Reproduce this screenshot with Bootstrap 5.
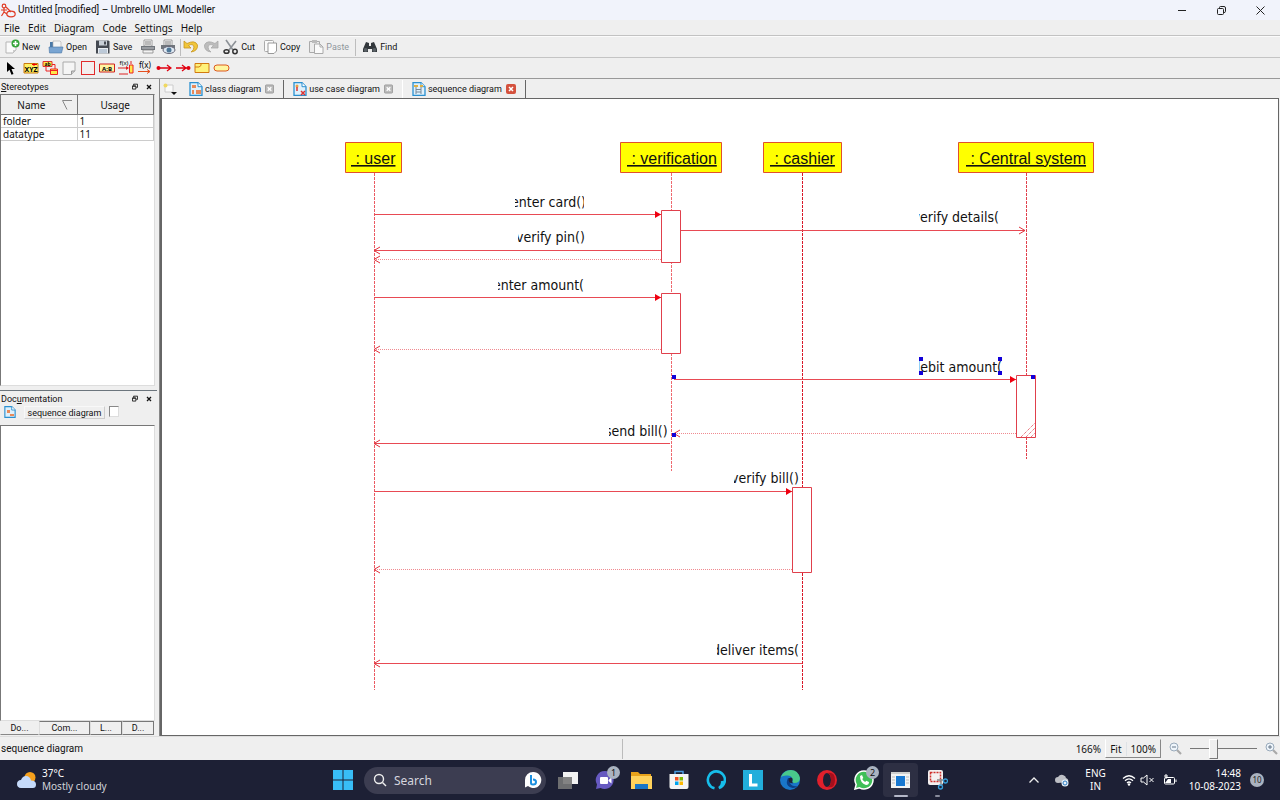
<!DOCTYPE html>
<html lang="en">
<head>
<meta charset="utf-8">
<meta name="viewport" content="width=device-width, initial-scale=1">
<title>Untitled [modified] – Umbrello UML Modeller</title>
<link rel="stylesheet" href="https://cdn.jsdelivr.net/npm/bootstrap@5.3.0/dist/css/bootstrap.min.css">
<style>
  body { font-family: "Noto Sans", "Open Sans", sans-serif; font-size: 10px; line-height: 14px; color: #111; background: #efefef; height: 100vh; overflow: hidden; }
  button { font: inherit; color: inherit; background: none; border: 0; padding: 0; }
  svg { display: block; flex: none; }
  .titlebar { height: 20px; background: #f1f3fb; font-family: Roboto, sans-serif; gap: 2px; }
  .winbtn { width: 39px; height: 20px; }
  .menus { height: 16px; border-bottom: 1px solid #c2c2c2; padding-left: 4px; gap: 8px; }
  .menus a { color: #111; text-decoration: none; }
  .tools, .dockhead, .docrow, .docktabs, .viewtabs, .msg { font-family: Roboto, sans-serif; }
  .tools { height: 22px; border-top: 1px solid #fbfbfb; border-bottom: 1px solid #c4c4c4; font-size: 9px; }
  .tools .cmd { display: flex; align-items: center; gap: 2px; padding: 0 4px; }
  .tools .vsep { width: 1px; height: 17px; background: #bdbdbd; margin: 0 2px; }
  .shapes { height: 21px; border-bottom: 1px solid #999; padding-left: 4px; gap: 3px; }
  .dock { width: 157px; }
  .dockhead { height: 15px; font-size: 9px; padding: 0 5px 0 1px; }
  .sunken { background: #fff; border: 1px solid #777; border-right-color: #ddd; border-bottom-color: #ddd; margin-right: 2px; }
  .stereo { line-height: 12px; width: 153px; border-collapse: separate; border-spacing: 0; }
  .stereo th { background: #efefef; font-weight: 400; height: 20px; text-align: center; border-right: 1px solid #777; border-bottom: 1px solid #777; }
  .stereo td { height: 13px; padding: 0 2px; border-right: 1px solid #ccc; border-bottom: 1px solid #ccc; }
  .docrow { height: 19px; font-size: 9px; }
  .docname { width: 81px; height: 13px; line-height: 12px; text-align: center; border: 1px solid #ccc; border-top-color: #f8f8f8; border-left-color: #f8f8f8; }
  .docrow input { appearance: none; width: 10px; height: 11px; margin: 0 0 0 4px; background: #fff; border: 1px solid #ddd; border-top-color: #888; border-left-color: #888; }
  .doctext { resize: none; border-radius: 0; outline: 0; }
  .docktabs { height: 15px; font-size: 9px; line-height: 13px; }
  .docktabs button { border: 1px solid #777; border-left-color: #ddd; height: 14px; }
  .docktabs .on { border-color: #efefef #efefef #888; }
  .work { border-left: 1px solid #888; margin-left: 2px; }
  .viewtabs { height: 19px; font-size: 9px; padding-left: 3px; }
  .vtab { display: flex; align-items: center; height: 18px; padding: 0 9px; gap: 2px; border-right: 1px solid #666; }
  .vtab.soft { border-right-color: #fff; }
  .vtab .x { margin-left: 2px; }
  .paper { background: #fff; border: 1px solid #666; border-width: 1px 1px 1px 2px; margin-right: 1px; overflow: hidden; }
  .status { height: 24px; border-top: 1px solid #ddd; }
  .cell { height: 20px; }
  .msg { width: 623px; border-right: 1px solid #bbb; padding-left: 1px; }
  .fitbox { border: 1px solid #888; border-top-color: #efefef; border-left-color: #fff; height: 19px; }
  .fitbox button { padding: 0 4px; }
  .zoomer { appearance: none; width: 67px; height: 20px; margin: 0; background: linear-gradient(#777,#777) 0 9px / 100% 1px no-repeat; }
  .zoomer::-webkit-slider-thumb { appearance: none; width: 9px; height: 20px; background: #efefef; border: 1px solid #777; border-left-color: #fff; border-top-color: #fff; }
  .taskbar { height: 40px; background: #1d2035; color: #fff; display: grid; grid-template-columns: 1fr auto 1fr; align-items: center; line-height: 13px; }
  .sky { color: #d2d3da; }
  .app { position: relative; width: 35px; height: 34px; display: flex; align-items: center; justify-content: center; }
  .app.open { background: #2d2f43; border-radius: 4px; }
  .search { width: 182px; height: 27px; border-radius: 14px; background: #3c3d51; padding: 0 4px 0 9px; gap: 7px; }
  .search input { min-width: 0; background: none; border: 0; outline: 0; color: #ddd; font-size: 12px; padding: 0; }
  .search input::placeholder { color: #d5d5de; opacity: 1; }
  .note-count { position: absolute; right: 2px; top: 3px; width: 13px; height: 13px; border-radius: 7px; background: #aab3c0; color: #111; font-size: 9px; line-height: 13px; text-align: center; }
  .run { position: absolute; bottom: 0; height: 2px; border-radius: 1px; background: #b5b8c8; width: 14px; }
  .run.tiny { width: 5px; background: #888b9b; }
  .tray { padding-right: 16px; }
  .day { width: 14px; height: 14px; border-radius: 7px; background: #aab3c0; color: #222; font-size: 8px; line-height: 14px; text-align: center; margin-left: 9px; }
  .lbl { font: 14px "DejaVu Sans Condensed", "Noto Sans", sans-serif; fill: #111; }
  .role { font: 16px "Liberation Sans", Arial, sans-serif; fill: #111; white-space: pre; text-decoration: underline; }
</style>
</head>
<body class="d-flex flex-column">

<svg width="0" height="0" class="position-absolute" aria-hidden="true">
  <symbol id="diagdoc" viewBox="0 0 14 14"><path d="M1 .7h8l4 4v8.600H1z" fill="#dff0fb" stroke="#2a90d0" stroke-width="1.300"/><path d="M9 .7v4h4" fill="#fff" stroke="#2a90d0"/></symbol>
  <symbol id="restore" viewBox="0 0 7 7"><path d="M2 .8h4.500v3.700H5M2 .5v2M.5 3h4v3.500h-4zM.5 3h4" fill="none" stroke="#111" stroke-width="1"/></symbol>
  <symbol id="cross" viewBox="0 0 6 6"><path d="M1 1l4 4M5 1L1 5" stroke="#111" stroke-width="1.300"/></symbol>
  <symbol id="tabx" viewBox="0 0 10 10"><rect x=".5" y=".5" width="9" height="9" rx="1" fill="#bbb" stroke="#999"/><path d="M3 3l4 4M7 3L3 7" stroke="#fff" stroke-width="1.500"/></symbol>
  <symbol id="lens" viewBox="0 0 13 13"><path d="M8 8l4 4" stroke="#a9a9a9" stroke-width="2.200"/><circle cx="5" cy="5" r="4" fill="#eef5fb" stroke="#9ab" stroke-width="1"/></symbol>
</svg>

<header class="titlebar d-flex align-items-center">
  <svg width="16" height="18" viewBox="0 0 16 18"><g fill="none" stroke="#e03c28" stroke-width="1.200"><circle cx="4" cy="5" r="1.800"/><path d="M4 7v4M1 9h6M4 11l-2.500 4M4 11l3 2M6 6l5 5"/><ellipse cx="11" cy="13" rx="4.200" ry="2.800"/></g></svg>
  <span>Untitled [modified] – Umbrello UML Modeller</span>
  <div class="ms-auto d-flex">
    <button class="winbtn d-flex align-items-center justify-content-center" aria-label="Minimize"><svg width="9" height="9"><path d="M0 4.500h8" stroke="#222"/></svg></button>
    <button class="winbtn d-flex align-items-center justify-content-center" aria-label="Restore"><svg width="9" height="9" viewBox="0 0 9 9"><path d="M2.500 2V1.500q0-1 1-1H7q1.500 0 1.500 1.500v3.500q0 1-1.500 1" fill="none" stroke="#222"/><rect x=".5" y="2.500" width="6" height="6" rx="1" fill="none" stroke="#222"/></svg></button>
    <button class="winbtn d-flex align-items-center justify-content-center" aria-label="Close"><svg width="9" height="9"><path d="M.5.5l8 8M8.500.5l-8 8" stroke="#222"/></svg></button>
  </div>
</header>

<nav class="menus d-flex align-items-center">
  <a href="#">File</a><a href="#">Edit</a><a href="#">Diagram</a><a href="#">Code</a><a href="#">Settings</a><a href="#">Help</a>
</nav>

<div class="tools d-flex align-items-center" role="toolbar">
  <button class="cmd"><svg width="16" height="16" viewBox="0 0 16 16"><path d="M2 3h10v8l-3 3H2z" fill="#fafafa" stroke="#b5b5b5"/><path d="M12 11l-3 3v-3z" fill="#ccc"/><circle cx="11.500" cy="4.500" r="4" fill="#35a53a"/><path d="M11.500 2v5M9 4.500h5" stroke="#fff" stroke-width="1.600"/></svg>New</button>
  <button class="cmd"><svg width="16" height="16" viewBox="0 0 16 16"><path d="M2 3h4l1 2h6v8H2z" fill="#4a7aa8"/><path d="M5 2h7l1 1v7H5z" fill="#f5f5f5" stroke="#aaa" stroke-width=".6"/><path d="M1 8h14l-1.500 6H1.500z" fill="#7aa5d2" stroke="#4a76a5" stroke-width=".6"/></svg>Open</button>
  <button class="cmd"><svg width="16" height="16" viewBox="0 0 16 16"><path d="M1 1.500h12.500l1 1v12H1z" fill="#454a52"/><rect x="4" y="1.500" width="8" height="5" fill="#c9d0d8"/><rect x="9" y="2.500" width="2" height="3" fill="#454a52"/><rect x="3" y="9" width="10" height="5.500" fill="#e9edf2"/><path d="M4 11h8M4 13h8" stroke="#8fa5bd"/></svg>Save</button>
  <button class="cmd pe-0" aria-label="Print"><svg width="16" height="16" viewBox="0 0 16 16"><path d="M4 1h8v6H4z" fill="#fff" stroke="#888" stroke-width=".8"/><path d="M5 3h6M5 5h6" stroke="#777"/><path d="M1 7h14v4H1z" fill="#70757b"/><path d="M2 9h12" stroke="#c5c8cb"/><path d="M3 11h10v3H3z" fill="#f2f2f2" stroke="#888" stroke-width=".8"/></svg></button>
  <button class="cmd pe-1" aria-label="Print Preview"><svg width="16" height="16" viewBox="0 0 16 16"><path d="M4 1h8v6H4z" fill="#fff" stroke="#888" stroke-width=".8"/><path d="M5 3h6M5 5h6" stroke="#777"/><path d="M1 6h14v4H1z" fill="#70757b"/><ellipse cx="9" cy="11" rx="6" ry="3.500" fill="#dfe9f2" stroke="#667"/><circle cx="9" cy="11" r="2.500" fill="#4f7898"/></svg></button>
  <span class="vsep ms-0"></span>
  <button class="cmd px-0" aria-label="Undo"><svg width="16" height="16" viewBox="0 0 16 16"><path d="M1 2v7h7L5.500 6.500Q10 4 11 8q0 3-3 5 7-1 6.500-7Q12 .5 4 4.500z" fill="#f1c63a" stroke="#c69521" stroke-width=".8"/></svg></button>
  <button class="cmd pe-1" aria-label="Redo"><svg width="16" height="16" viewBox="0 0 16 16"><path d="M15 2v7H8l2.500-2.500Q6 4 5 8q0 3 3 5-7-1-6.500-7Q4 .5 12 4.500z" fill="#bcbcbc" stroke="#aaa" stroke-width=".8"/></svg></button>
  <button class="cmd ps-0"><svg width="16" height="16" viewBox="0 0 16 16"><path d="M3 1l7 10M13 2L6 11" stroke="#8d9297" stroke-width="1.600"/><g fill="none" stroke="#333" stroke-width="1.500"><ellipse cx="3.500" cy="12.500" rx="2.500" ry="1.800"/><circle cx="12" cy="12.500" r="2.200"/></g></svg>Cut</button>
  <button class="cmd"><svg width="15" height="16" viewBox="0 0 15 16"><rect x="1.500" y="1.500" width="9" height="11" rx="1" fill="#fafafa" stroke="#aaa"/><path d="M5 4h8.500v8l-2.500 2.500H5z" fill="#fff" stroke="#999"/></svg>Copy</button>
  <button class="cmd text-secondary text-opacity-75"><svg width="16" height="16" viewBox="0 0 16 16"><path d="M1.500 2.500h10v11h-10z" fill="#ececec" stroke="#aaa"/><rect x="4" y="1" width="5" height="3" fill="#bbb"/><path d="M6.500 5H12l3 3v6.500H6.500z" fill="#fafafa" stroke="#aaa"/><path d="M12 5v3h3" fill="none" stroke="#aaa"/></svg>Paste</button>
  <span class="vsep"></span>
  <button class="cmd"><svg width="16" height="16" viewBox="0 0 16 16"><path d="M4 3l3 1v3h2V4l3-1 3 7v3h-5v-3H6v3H1v-3z" fill="#32373b"/><circle cx="3.700" cy="11" r="2" fill="#596065"/><circle cx="12.300" cy="11" r="2" fill="#596065"/></svg>Find</button>
</div>

<div class="shapes d-flex align-items-center" role="toolbar">
  <button aria-label="Select"><svg width="16" height="16" viewBox="0 0 16 16"><path d="M3 2l8 7H7.500l2 5-2 .8-2-5L3 12z" fill="#000"/></svg></button>
  <button aria-label="Object"><svg width="16" height="16" viewBox="0 0 16 16"><path d="M1 3.500h14v9.500H1z" fill="#fff263" stroke="#c97a10"/><text x="8" y="12" font-size="7" font-weight="700" text-anchor="middle">XYZ</text><path d="M11 3V6M9 4.500h5" stroke="#e00"/></svg></button>
  <button aria-label="Message object"><svg width="16" height="16" viewBox="0 0 16 16"><path d="M1 1.500h9v5H1z" fill="#ffe84a" stroke="#d33"/><text x="5.500" y="6" font-size="5" font-weight="700" text-anchor="middle">ab</text><path d="M10 4.500h3V9M4 7v4h4" fill="none" stroke="#e22"/><path d="M8.500 9h7v5.500h-7z" fill="#ffe84a" stroke="#e22"/><path d="M9 10.500h6" stroke="#e22"/></svg></button>
  <button aria-label="Note"><svg width="16" height="16" viewBox="0 0 16 16"><path d="M2 2h12v9l-3.500 3.500H2z" fill="#f5f5f5" stroke="#aaa"/><path d="M14 11h-3.500v3.500" fill="#ccc" stroke="#999"/></svg></button>
  <button aria-label="Box"><svg width="16" height="16"><rect x="1.500" y="1.500" width="13" height="13" fill="#f3eeee" stroke="#e12b2b"/></svg></button>
  <button aria-label="Object box"><svg width="16" height="16" viewBox="0 0 16 16"><path d="M.5 4h15v8H.5z" fill="#fff5a0" stroke="#d02020"/><text x="8" y="10.500" font-size="6" font-weight="700" text-anchor="middle">A:B</text></svg></button>
  <button aria-label="Synchronous message"><svg width="16" height="16" viewBox="0 0 16 16"><text x="6" y="5" font-size="6" text-anchor="middle">f(x)</text><path d="M0 8h10M13 1v3M1 14h9" stroke="#d22"/><path d="M8 6l3 2-3 2z" fill="#d22"/><path d="M11.500 5h3.500v8h-3.500z" fill="#ffe84a" stroke="#e22"/></svg></button>
  <button aria-label="Asynchronous message"><svg width="16" height="16" viewBox="0 0 16 16"><text x="8" y="8" font-size="8" text-anchor="middle">f(x)</text><path d="M1 11.500h12M10 9.500l3 2-3 2" stroke="#e55020" fill="none"/></svg></button>
  <button aria-label="Found message"><svg width="16" height="16" viewBox="0 0 16 16"><path d="M2 8h13M11 5l4 3-4 3" stroke="#e00010" stroke-width="1.300" fill="none"/><circle cx="2.500" cy="8" r="2" fill="#e00010"/></svg></button>
  <button aria-label="Lost message"><svg width="16" height="16" viewBox="0 0 16 16"><path d="M1 8h13M7 5l4 3-4 3" stroke="#e00010" stroke-width="1.300" fill="none"/><circle cx="13.500" cy="8" r="2" fill="#e00010"/></svg></button>
  <button aria-label="Combined fragment"><svg width="16" height="16" viewBox="0 0 16 16"><path d="M1 3.500h14v9H1z" fill="#fff27a" stroke="#d27a10"/><path d="M1 7h4l2-1.500v-2" fill="none" stroke="#d27a10"/></svg></button>
  <button aria-label="Precondition"><svg width="17" height="16" viewBox="0 0 17 16"><rect x="1" y="5" width="15" height="6" rx="3" fill="#fff6a0" stroke="#dd5a20"/></svg></button>
</div>

<main class="d-flex flex-grow-1" style="min-height:0">
  <aside class="dock d-flex flex-column flex-shrink-0">
    <div class="dockhead d-flex align-items-center gap-2"><span class="me-auto"><u>S</u>tereotypes</span><svg width="6" height="7"><use href="#restore"/></svg><svg width="6" height="6"><use href="#cross"/></svg></div>
    <div class="sunken flex-grow-1" style="flex-basis:0">
      <table class="stereo">
        <thead><tr><th class="w-50"><span class="d-flex align-items-center justify-content-end gap-3 pe-1">Name<svg width="10" height="10"><path d="M10 .5H.5l4.500 9" fill="none" stroke="#888"/></svg></span></th><th>Usage</th></tr></thead>
        <tbody><tr><td>folder</td><td>1</td></tr><tr><td>datatype</td><td>11</td></tr></tbody>
      </table>
    </div>
    <div class="mt-1 border-top border-secondary"></div>
    <div class="dockhead d-flex align-items-center gap-2"><span class="me-auto">Doc<u>u</u>mentation</span><svg width="6" height="7"><use href="#restore"/></svg><svg width="6" height="6"><use href="#cross"/></svg></div>
    <div class="docrow d-flex align-items-start ps-1">
      <svg width="12" height="12" class="me-2"><use href="#diagdoc"/><path d="M3 4h3v3H3zM6 8h4v2H6z" fill="#e88a5a"/></svg>
      <label class="docname" for="docmark">sequence diagram</label><input type="checkbox" id="docmark">
    </div>
    <textarea class="doctext sunken flex-grow-1" style="flex-basis:0" aria-label="Documentation"></textarea>
    <div class="docktabs d-flex"><button class="on" style="width:39px">Do...</button><button style="width:51px">Com...</button><button style="width:32px">L...</button><button style="width:32px">D...</button></div>
  </aside>

  <section class="work flex-grow-1 d-flex flex-column">
    <div class="viewtabs d-flex align-items-center">
      <button aria-label="New diagram" class="me-1"><svg width="14" height="14" viewBox="0 0 14 14"><path d="M2 3h8v7H2z" fill="#fafafa" stroke="#ccc"/><circle cx="2.500" cy="3.500" r="2" fill="#f0d860"/><path d="M8 10h6l-3 3z" fill="#111"/></svg></button>
      <div class="vtab ps-2"><svg width="14" height="14"><use href="#diagdoc"/><path d="M3 3h4v3H3zM7 8h5v4H7zM3 8h2v4H3z" fill="#e88a5a"/></svg><span>class diagram</span><button class="x" aria-label="Close"><svg width="9" height="10"><use href="#tabx"/></svg></button></div>
      <div class="vtab soft"><svg width="14" height="14"><use href="#diagdoc"/><circle cx="4" cy="4" r="1.500" fill="#e8a040"/><path d="M4 5v4M8 9l4 4M12 9l-4 4" stroke="#d33" stroke-width="1.500"/></svg><span>use case diagram</span><button class="x" aria-label="Close"><svg width="9" height="10"><use href="#tabx"/></svg></button></div>
      <div class="vtab"><svg width="14" height="14"><use href="#diagdoc"/><path d="M2 3h4v2H2zM8 3h3v2H8z" fill="#e0b040"/><path d="M4 5v7M9 5v7M4 7.500h5M4 10h5" stroke="#789"/></svg><span>sequence diagram</span><button class="x" aria-label="Close"><svg width="10" height="10"><rect width="10" height="10" rx="2" fill="#d4513d"/><path d="M3 3l4 4M7 3L3 7" stroke="#fff" stroke-width="1.500"/></svg></button></div>
    </div>
    <div class="paper flex-grow-1">
      <svg width="100%" height="100%" role="img" aria-label="Sequence diagram">
        <defs>
          <marker id="solid" markerUnits="userSpaceOnUse" markerWidth="7" markerHeight="8" refX="6" refY="4" orient="auto"><path d="M0 .5L6 4 0 7.500z" fill="#f00010"/></marker>
          <marker id="open" markerUnits="userSpaceOnUse" markerWidth="8" markerHeight="9" refX="6" refY="4.500" orient="auto"><path d="M0 1l6 3.500L0 8" fill="none" stroke="#e0303c"/></marker>
        </defs>
        <g transform="translate(-162 -99)">
          <g stroke="#e0404c" stroke-dasharray="3 1"><path d="M374.500 173v517" stroke="#ea5a62"/><path d="M671.500 173v298" stroke="#ee6a70"/><path d="M802.500 173v517" stroke="#d81828"/><path d="M1026.500 173v286"/></g>
          <g fill="none" stroke="#e84a54">
            <path d="M374 214.500h287" marker-end="url(#solid)"/><path d="M374 297.500h287" marker-end="url(#solid)"/><path d="M674 379.500h342" marker-end="url(#solid)"/><path d="M374 491.500h418" marker-end="url(#solid)"/>
            <path d="M681 230.500h344" marker-end="url(#open)"/><path d="M661 250.500H374" marker-end="url(#open)"/><path d="M670 443.500H374" marker-end="url(#open)"/><path d="M802 663.500H374" marker-end="url(#open)"/>
            <g stroke="#f08a90" stroke-dasharray="1 1"><path d="M661 259.500H374" marker-end="url(#open)"/><path d="M661 349.500H374" marker-end="url(#open)"/><path d="M1016 433.500H674" marker-end="url(#open)"/><path d="M792 569.500H374" marker-end="url(#open)"/></g>
          </g>
          <g fill="#fff" stroke="#e0404c"><path d="M661.500 210.500h19v52h-19zM661.500 293.500h19v60h-19zM1016.500 375.500h19v62h-19zM792.500 487.500h19v85h-19z"/><path d="M1021 437l14-14M1026 437l9-9M1031 437l4-4" stroke-dasharray="1 1"/></g>
          <g fill="#ff0" stroke="#e0502c"><path d="M345.500 142.500h56v30h-56zM620.500 142.500h101v30h-101zM763.500 142.500h78v30h-78zM958.500 142.500h135v30h-135z"/></g>
          <text class="role" x="351" y="164"> : user</text><text class="role" x="627" y="164"> : verification</text><text class="role" x="770" y="164"> : cashier</text><text class="role" x="966" y="164"> : Central system</text>
          <svg x="515" y="192" width="69" height="20"><text class="lbl" x="-4" y="15">enter card()</text></svg>
          <svg x="518" y="227" width="67" height="20"><text class="lbl" x="-2" y="15">verify pin()</text></svg>
          <svg x="498" y="275" width="86" height="20"><text class="lbl" x="86" y="15" text-anchor="end">enter amount(</text></svg>
          <svg x="919" y="207" width="80" height="20"><text class="lbl" x="80" y="15" text-anchor="end">verify details(</text></svg>
          <svg x="919" y="357" width="83" height="20"><text class="lbl" x="83" y="15" text-anchor="end">debit amount(</text></svg>
          <svg x="609" y="421" width="58" height="20"><text class="lbl" x="-4" y="15">send bill()</text></svg>
          <svg x="734" y="468" width="65" height="20"><text class="lbl" x="-3" y="15">verify bill()</text></svg>
          <svg x="717" y="640" width="82" height="20"><text class="lbl" x="82" y="15" text-anchor="end">deliver items(</text></svg>
          <path d="M919 357h4v4h-4zM998 357h4v4h-4zM919 371h4v4h-4zM998 371h4v4h-4zM672 375h4v4h-4zM672 433h4v4h-4zM1031 375h4v4h-4z" fill="#1200d8"/>
        </g>
      </svg>
    </div>
  </section>
</main>

<footer class="status d-flex align-items-center">
  <div class="cell msg d-flex align-items-center"><span>sequence diagram</span></div>
  <div class="ms-auto d-flex align-items-center">
    <span class="me-1">166%</span>
    <div class="fitbox d-flex align-items-center"><button class="border-end">Fit</button><button>100%</button></div>
    <button class="px-2" aria-label="Zoom out"><svg width="13" height="13"><use href="#lens"/><path d="M3 5h4" stroke="#678"/></svg></button>
    <input type="range" class="zoomer" min="0" max="100" value="33" aria-label="Zoom">
    <button class="ps-2" aria-label="Zoom in"><svg width="15" height="13" viewBox="0 0 15 13"><use href="#lens" width="13" height="13"/><path d="M3 5h4M5 3v4" stroke="#678"/></svg></button>
  </div>
</footer>

<div class="taskbar">
  <div class="d-flex align-items-center gap-1 ps-3">
    <svg width="22" height="18" viewBox="0 0 22 18"><circle cx="14" cy="6.500" r="5.500" fill="#f5a01c"/><path d="M5 17q-4-.3-4-4t4-4q1.500-4 5-4 4 0 5 4.500 5 0 5 4t-4 3.500z" fill="#c5dafa"/></svg>
    <div>37°C<br><span class="sky">Mostly cloudy</span></div>
  </div>
  <div class="d-flex align-items-center">
    <button class="app" aria-label="Start"><svg width="20" height="20" viewBox="0 0 20 20"><path d="M0 0h9.500v9.500H0zM10.500 0H20v9.500h-9.500zM0 10.500h9.500V20H0zM10.500 10.500H20V20h-9.500z" fill="#38bdf6"/></svg></button>
    <div class="search d-flex align-items-center mx-1">
      <svg width="14" height="14"><circle cx="6" cy="6" r="4.500" fill="none" stroke="#eee" stroke-width="1.400"/><path d="M9.500 9.500l3.500 3.500" stroke="#eee" stroke-width="1.400"/></svg>
      <input class="flex-grow-1" type="search" placeholder="Search" aria-label="Search">
      <svg width="18" height="18" viewBox="0 0 18 18"><path d="M9 1a8 8 0 1 1-5 14L1 16.500V9A8 8 0 0 1 9 1z" fill="#fff"/><path d="M7 4v8q0 1.500 2 1.500 3 0 3-2.500t-3-2.500" fill="none" stroke="#1b8fe0" stroke-width="2"/></svg>
    </div>
    <div class="d-flex" style="column-gap:2px">
      <button class="app" aria-label="Task View"><svg width="20" height="18"><rect x="5" y="1" width="15" height="12" fill="#f2f2f2"/><rect x="0" y="6" width="14" height="12" fill="#777" opacity=".9"/></svg></button>
      <button class="app" aria-label="Chat"><svg width="20" height="20" viewBox="0 0 20 20"><path d="M10 1a9 9 0 1 1-4.500 17L1 19l1-4.500A9 9 0 0 1 10 1z" fill="#6659c0"/><rect x="5" y="7" width="8" height="7" rx="1" fill="#fff"/><path d="M13.500 10l3-2.500v6l-3-2.500z" fill="#fff"/></svg><span class="note-count">1</span></button>
      <button class="app" aria-label="File Explorer"><svg width="21" height="18" viewBox="0 0 21 18"><path d="M0 1h7l2 2h11v5H0z" fill="#e8a21b"/><path d="M0 5h21v13H0z" fill="#ffd25c"/><path d="M4 18v-5h13v5z" fill="#1976c8"/></svg></button>
      <button class="app" aria-label="Microsoft Store"><svg width="20" height="20" viewBox="0 0 20 20"><path d="M6 5V1.500h8V5" fill="none" stroke="#4a9ae0" stroke-width="1.500"/><path d="M.5 4h19v13q0 2-2 2h-15q-2 0-2-2z" fill="#f4f4f4"/><path d="M6 7h3.500v3.500H6z" fill="#f05022"/><path d="M10.500 7H14v3.500h-3.500z" fill="#7fba00"/><path d="M6 11.500h3.500V15H6z" fill="#00a4ef"/><path d="M10.500 11.500H14V15h-3.500z" fill="#ffb900"/></svg></button>
      <button class="app" aria-label="Alexa"><svg width="20" height="20" viewBox="0 0 20 20"><path d="M8.500 18.200A8.500 8.500 0 1 1 13 18Q17 15 16 11" fill="none" stroke="#16bdea" stroke-width="2.600"/></svg></button>
      <button class="app" aria-label="Lenovo Vantage"><svg width="20" height="20"><rect width="20" height="20" fill="#22aedb"/><path d="M7.500 4v11h7" fill="none" stroke="#fff" stroke-width="3"/></svg></button>
      <button class="app" aria-label="Edge"><svg width="20" height="20" viewBox="0 0 20 20"><circle cx="10" cy="10" r="10" fill="#1976c9"/><path d="M1 7Q4 0 11 0t9 8q0 5-6 5-2 0-1.500-2Q13 6 8 5.500 3 5 1 7z" fill="#49c98a"/><path d="M8 8q-4 8 5 10 3 0 5-2-6 1-8-3-1-3 1-5z" fill="#0b3f87"/><path d="M8.500 10q0-2 2-2.500 2.500 0 2 3-1 2 1 2.500-4 1-5-3z" fill="#1d2035"/></svg></button>
      <button class="app" aria-label="Opera"><svg width="20" height="20" viewBox="0 0 20 20"><circle cx="10" cy="10" r="10" fill="#e0202c"/><ellipse cx="10" cy="10" rx="4" ry="7" fill="#1d2035"/><path d="M10 3q8-2 8 7t-8 7q4-1 4-7t-4-7z" fill="#a50f1c"/></svg></button>
      <button class="app" aria-label="WhatsApp"><svg width="20" height="20" viewBox="0 0 20 20"><path d="M10 1a9 9 0 1 1-4.500 16.800L1 19l1.200-4.500A9 9 0 0 1 10 1z" fill="#3fbf58" stroke="#fff" stroke-width="1.500"/><path d="M6 6l2-1 1.300 3L8.200 9q1 2 3 3l1-1.200 2.800 1.300q0 3-3 2.900Q6 13 6 6z" fill="#fff"/></svg><span class="note-count">2</span></button>
      <button class="app open" aria-label="Umbrello"><svg width="19" height="16"><rect width="19" height="16" fill="#f2f2f2"/><path d="M0 1h19" stroke="#aaa"/><rect x="5" y="4" width="9" height="10" fill="#1877d0"/><path d="M1 5h3M1 8h3M1 11h3M15 5h3M15 8h3M15 11h3" stroke="#bbb"/></svg><span class="run"></span></button>
      <button class="app" aria-label="Snipping Tool"><svg width="20" height="20" viewBox="0 0 20 20"><rect width="15" height="15" rx="2" fill="#f4f0f0"/><rect x="2.500" y="2.500" width="10" height="9" fill="none" stroke="#d0302c" stroke-width="1.500" stroke-dasharray="2 1"/><path d="M9 10h7M13 9v7" stroke="#888" stroke-width="1.500"/><g fill="none" stroke="#39a0dc" stroke-width="1.300"><circle cx="17.500" cy="11" r="2"/><circle cx="12.500" cy="17" r="2"/></g></svg><span class="run tiny"></span></button>
    </div>
  </div>
  <div class="tray d-flex align-items-center justify-content-end">
    <button aria-label="Show hidden icons"><svg width="10" height="6"><path d="M.5 5.500L5 1l4.500 4.500" fill="none" stroke="#eee" stroke-width="1.300"/></svg></button>
    <svg class="ms-3" width="14" height="13" viewBox="0 0 14 13"><path d="M3 9Q0 9 0 6t3-3q2-3 5-2t3 3q3 1 2 4z" fill="#bdbfc5"/><circle cx="10" cy="9" r="3.500" fill="#e8f2fa"/><path d="M8 9a2 2 0 0 1 4 0M12 9a2 2 0 0 1-4 0" fill="none" stroke="#2a7ac0"/></svg>
    <div class="text-center ms-3">ENG<br>IN</div>
    <svg class="ms-3" width="14" height="12" viewBox="0 0 14 12"><g fill="none" stroke="#fff" stroke-width="1.200"><path d="M1 4.500Q7-1 13 4.500M3 6.800Q7 3 11 6.800M5 9Q7 7 9 9"/></g><circle cx="7" cy="10.500" r="1.200" fill="#fff"/></svg>
    <svg class="ms-1" width="15" height="12" viewBox="0 0 15 12"><path d="M1 4h2.500L7 1v10L3.500 8H1zM9.500 4l4 4M13.500 4l-4 4" fill="none" stroke="#fff"/></svg>
    <svg class="ms-2" width="14" height="12" viewBox="0 0 14 12"><rect x="1.500" y="3.500" width="10" height="6.500" rx="1" fill="none" stroke="#fff"/><path d="M13 5.500v2.500" stroke="#fff"/><path d="M5 5h3v4H2z" fill="#fff"/><path d="M3 0v5M1 2h4" stroke="#fff"/></svg>
    <div class="text-end ms-2 ps-1">14:48<br>10-08-2023</div>
    <span class="day">10</span>
  </div>
</div>
<script src="https://cdn.jsdelivr.net/npm/bootstrap@5.3.0/dist/js/bootstrap.bundle.min.js"></script>
</body>
</html>
